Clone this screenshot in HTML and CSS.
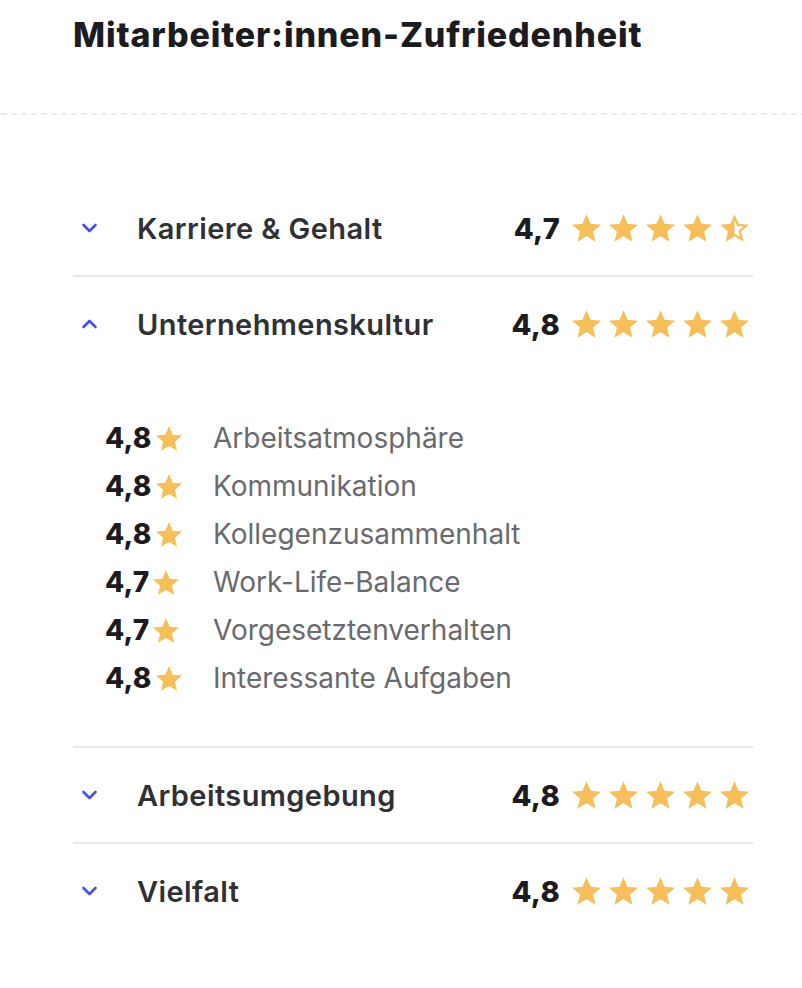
FILE: index.html
```html
<!DOCTYPE html>
<html lang="de">
<head>
    <meta charset="UTF-8">
    <title>Mitarbeiter:innen-Zufriedenheit</title>
    <link rel="stylesheet" href="styles.css">
</head>

<body>
<svg class="defs" width="0" height="0">
    <symbol id="star" viewBox="2 2 20 19">
        <path d="M12 17.27L18.18 21l-1.64-7.03L22 9.24l-7.19-.61L12 2 9.19 8.63 2 9.24l5.46 4.73L5.82 21z"/>
    </symbol>
    <symbol id="star-half" viewBox="2 2 20 19">
        <path d="M22 9.24l-7.19-.62L12 2 9.19 8.63 2 9.24l5.46 4.73L5.82 21 12 17.27 18.18 21l-1.63-7.03L22 9.24zM12 15.4V6.1l1.71 4.04 4.38.38-3.32 2.88 1 4.28L12 15.4z"/>
    </symbol>
    <symbol id="chev-down" viewBox="0 0 16 10">
        <polyline points="2,2 8,8 14,2" fill="none" stroke="currentColor" stroke-width="2.6" stroke-linecap="round" stroke-linejoin="round"/>
    </symbol>
    <symbol id="chev-up" viewBox="0 0 16 10">
        <polyline points="2,8 8,2 14,8" fill="none" stroke="currentColor" stroke-width="2.6" stroke-linecap="round" stroke-linejoin="round"/>
    </symbol>
</svg>

<div class="header">
    <h2 class="title">Mitarbeiter:innen-Zufriedenheit</h2>
</div>
<div class="dashed"></div>

<div class="accordion">
    <div class="item">
        <div class="item-head">
            <span class="chev"><svg><use href="#chev-down"/></svg></span>
            <span class="item-title">Karriere &amp; Gehalt</span>
            <span class="score">4,7</span>
            <span class="stars">
                <svg><use href="#star"/></svg>
                <svg><use href="#star"/></svg>
                <svg><use href="#star"/></svg>
                <svg><use href="#star"/></svg>
                <svg><use href="#star-half"/></svg>
            </span>
        </div>
    </div>

    <div class="item open">
        <div class="item-head">
            <span class="chev"><svg><use href="#chev-up"/></svg></span>
            <span class="item-title">Unternehmenskultur</span>
            <span class="score">4,8</span>
            <span class="stars">
                <svg><use href="#star"/></svg>
                <svg><use href="#star"/></svg>
                <svg><use href="#star"/></svg>
                <svg><use href="#star"/></svg>
                <svg><use href="#star"/></svg>
            </span>
        </div>
        <ul class="sub">
            <li><span class="sub-score">4,8<svg><use href="#star"/></svg></span>Arbeitsatmosphäre</li>
            <li><span class="sub-score">4,8<svg><use href="#star"/></svg></span>Kommunikation</li>
            <li><span class="sub-score">4,8<svg><use href="#star"/></svg></span>Kollegenzusammenhalt</li>
            <li><span class="sub-score">4,7<svg><use href="#star"/></svg></span>Work-Life-Balance</li>
            <li><span class="sub-score">4,7<svg><use href="#star"/></svg></span>Vorgesetztenverhalten</li>
            <li><span class="sub-score">4,8<svg><use href="#star"/></svg></span>Interessante Aufgaben</li>
        </ul>
    </div>

    <div class="item">
        <div class="item-head">
            <span class="chev"><svg><use href="#chev-down"/></svg></span>
            <span class="item-title">Arbeitsumgebung</span>
            <span class="score">4,8</span>
            <span class="stars">
                <svg><use href="#star"/></svg>
                <svg><use href="#star"/></svg>
                <svg><use href="#star"/></svg>
                <svg><use href="#star"/></svg>
                <svg><use href="#star"/></svg>
            </span>
        </div>
    </div>

    <div class="item">
        <div class="item-head">
            <span class="chev"><svg><use href="#chev-down"/></svg></span>
            <span class="item-title">Vielfalt</span>
            <span class="score">4,8</span>
            <span class="stars">
                <svg><use href="#star"/></svg>
                <svg><use href="#star"/></svg>
                <svg><use href="#star"/></svg>
                <svg><use href="#star"/></svg>
                <svg><use href="#star"/></svg>
            </span>
        </div>
    </div>
</div>
</body>
</html>
```

FILE: styles.css
```css
*{
    margin:0;
    padding:0;
}
ul,ol{
    list-style: none;
}
body{
    font-family: Inter, "Noto Sans", sans-serif;
    background: #fff;
    color: #2f2f33;
}
.defs{
    position: absolute;
    width: 0;
    height: 0;
}

.header{
    padding: 14px 0 0 73px;
    height: 99px;
}
.title{
    font-size: 34px;
    font-weight: 800;
    line-height: 41px;
    color: #1c1c20;
    letter-spacing: 0.85px;
}
.dashed{
    height: 2px;
    background: repeating-linear-gradient(90deg, #ebebeb 0, #ebebeb 6px, transparent 6px, transparent 10px);
    background-position: 1px 0;
}

.accordion{
    width: 680px;
    margin: 66px 0 0 73px;
}
.item{
    border-bottom: 2px solid #e8e8e8;
}
.item:last-child{
    border-bottom: none;
}
.item-head{
    display: flex;
    align-items: center;
    height: 94px;
    cursor: pointer;
}
.chev{
    width: 64px;
    display: flex;
    color: #4a4fe6;
}
.chev svg{
    width: 17px;
    height: 10px;
    margin-left: 8px;
}
.item-title{
    flex: 1;
    font-size: 29px;
    font-weight: 600;
    letter-spacing: 0.4px;
    color: #303035;
}
.score{
    font-size: 29px;
    font-weight: 800;
    letter-spacing: 0.3px;
    color: #1c1c20;
    margin-right: 12px;
}
.stars{
    display: flex;
    gap: 8px;
    margin-right: 4px;
    fill: #f7bf5a;
}
.stars svg{
    width: 29px;
    height: 28px;
}

.sub{
    padding: 43px 0 44px 32px;
}
.sub li{
    display: flex;
    align-items: center;
    height: 48px;
    font-size: 28px;
    color: #6a6a6e;
}
.sub-score{
    width: 108px;
    display: flex;
    align-items: center;
    font-weight: 800;
    letter-spacing: 0.2px;
    color: #1c1c20;
}
.sub-score svg{
    width: 26px;
    height: 25px;
    margin-left: 4px;
    fill: #f7bf5a;
}
```
